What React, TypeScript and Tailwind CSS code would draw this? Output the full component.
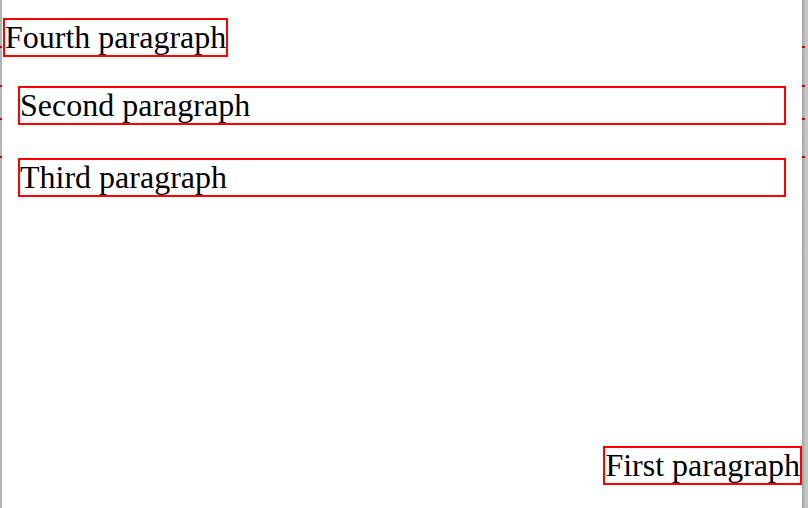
// Bordered paragraphs laid out in a flex column, with the thin gutters at each edge.
const TICKS = [46, 85, 118, 156];

function Box({ children, className = '' }: { children: React.ReactNode; className?: string }) {
  return (
    <p
      className={`border-2 border-[#ff0000] text-[32px] leading-[35px] text-black whitespace-nowrap ${className}`}
      style={{ fontFamily: '"Liberation Serif", "Times New Roman", serif' }}
    >
      {children}
    </p>
  );
}

export default function App() {
  return (
    <div className="flex h-[508px] w-[808px] overflow-hidden bg-white">
      {/* left gutter */}
      <div className="relative w-[2px] shrink-0 bg-[#b4b4b4]">
        {TICKS.map((y) => (
          <div key={y} className="absolute left-0 h-[2px] w-[2px] bg-[#d40000]" style={{ top: y }} />
        ))}
      </div>

      <div className="flex min-w-0 flex-1 flex-col">
        <Box className="ml-[1px] mt-[18px] self-start">Fourth paragraph</Box>
        <Box className="ml-[16px] mt-[29px] w-[768px]">Second paragraph</Box>
        <Box className="ml-[16px] mt-[33px] w-[768px]">Third paragraph</Box>
        <Box className="mb-[23px] mt-auto self-end">First paragraph</Box>
      </div>

      {/* right gutter */}
      <div className="relative w-[6px] shrink-0 bg-linear-to-r from-[#9c9c9c] via-[#c4c4c4] to-[#c6c6c6]">
        {TICKS.map((y) => (
          <div key={y} className="absolute left-0 h-[2px] w-[3px] bg-[#c00000]" style={{ top: y }} />
        ))}
      </div>
    </div>
  );
}
